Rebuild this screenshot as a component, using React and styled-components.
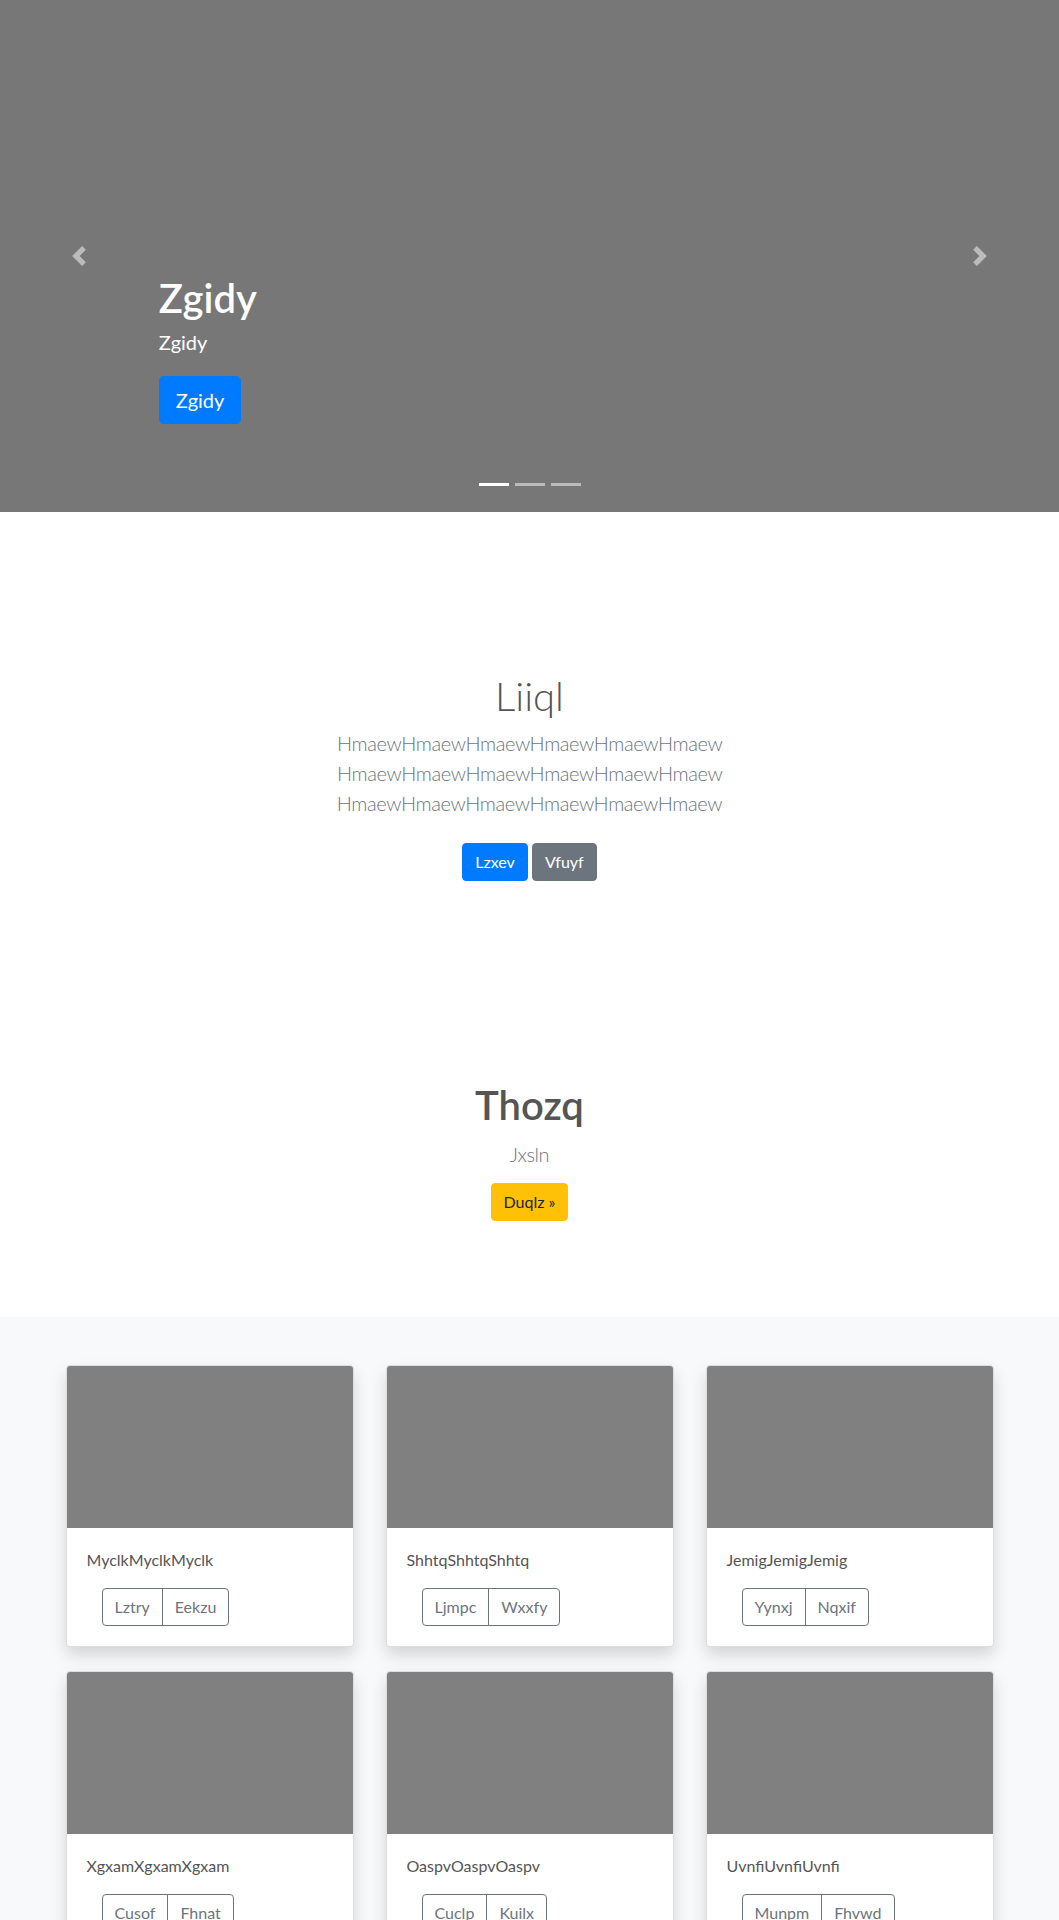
import React from 'react';
import styled, { createGlobalStyle } from 'styled-components';

const GlobalStyle = createGlobalStyle`
  *, *::before, *::after {
    box-sizing: border-box;
  }
  body {
    margin: 0;
    font-family: Lato, "Open Sans", "Noto Sans", sans-serif;
    font-size: 16px;
    line-height: 1.5;
    color: #555;
    background: #fff;
  }
`;

const Carousel = styled.div`
  position: relative;
  height: 512px;
  margin-bottom: 64px;
  background: #777;
  overflow: hidden;
`;

const Control = styled.button`
  position: absolute;
  top: 0;
  bottom: 0;
  ${(p) => (p.$side === 'left' ? 'left: 0;' : 'right: 0;')}
  width: 15%;
  display: flex;
  align-items: center;
  justify-content: center;
  padding: 0;
  border: none;
  background: none;
  opacity: 0.5;
  cursor: pointer;
`;

const Caption = styled.div`
  position: absolute;
  left: 15%;
  right: 15%;
  bottom: 52px;
  padding: 20px 0;
  color: #fff;
  text-align: left;
`;

const CaptionTitle = styled.h1`
  margin: 0 0 5px;
  font-size: 40px;
  font-weight: 600;
  line-height: 1.2;
`;

const CaptionText = styled.p`
  margin: 0 0 19px;
  font-size: 20px;
  line-height: 1.5;
`;

const Indicators = styled.ol`
  position: absolute;
  left: 15%;
  right: 15%;
  bottom: 0;
  display: flex;
  justify-content: center;
  margin: 0 0 16px;
  padding: 0;
  list-style: none;
`;

const Indicator = styled.li`
  box-sizing: content-box;
  width: 30px;
  height: 3px;
  margin: 0 3px;
  border-top: 10px solid transparent;
  border-bottom: 10px solid transparent;
  background: #fff;
  background-clip: padding-box;
  opacity: ${(p) => (p.$active ? 1 : 0.5)};
`;

const Btn = styled.a`
  display: inline-block;
  padding: ${(p) => (p.$lg ? '8px 16px' : '6px 12px')};
  font-size: ${(p) => (p.$lg ? '20px' : '16px')};
  line-height: 1.5;
  border: 1px solid ${(p) => p.$bg};
  border-radius: ${(p) => (p.$lg ? '4.8px' : '4px')};
  background: ${(p) => p.$bg};
  color: ${(p) => p.$fg || '#fff'};
  text-decoration: none;
  cursor: pointer;
`;

const CaptionActions = styled.p`
  margin: 0 0 16px;
`;

const Jumbotron = styled.section`
  padding: ${(p) => p.$pad || '96px 16px'};
  text-align: center;
`;

const Narrow = styled.div`
  max-width: 450px;
  margin: 0 auto;
`;

const Heading = styled.h1`
  margin: 0 0 ${(p) => (p.$light ? '8px' : '10px')};
  font-size: 40px;
  font-weight: ${(p) => (p.$light ? 300 : 600)};
  line-height: 1.2;
  color: #555;
`;

const Lead = styled.p`
  margin: 0 0 ${(p) => p.$mb || '16px'};
  font-size: 20px;
  font-weight: 300;
  line-height: 1.5;
  letter-spacing: -0.02em;
  color: #6c757d;
`;

const Actions = styled.div`
  display: flex;
  justify-content: center;
  gap: 4px;
  margin: 8px 0;
`;

const Album = styled.section`
  padding: 48px 0;
  background: #f8f9fa;
`;

const CardGrid = styled.div`
  width: 928px;
  margin: 0 auto;
  display: grid;
  grid-template-columns: repeat(3, 1fr);
  column-gap: 32px;
  row-gap: 24px;
`;

const Card = styled.div`
  display: flex;
  flex-direction: column;
  background: #fff;
  border: 1px solid rgba(0, 0, 0, 0.125);
  border-radius: 4px;
  box-shadow: 0 8px 16px rgba(0, 0, 0, 0.15);
  overflow: hidden;
`;

const Thumb = styled.div`
  height: 162px;
  background: #808080;
`;

const CardBody = styled.div`
  padding: 20px;
`;

const CardText = styled.p`
  margin: 0 0 16px;
  color: #555;
`;

const Group = styled.div`
  display: inline-flex;
  margin-left: 15px;
`;

const GroupBtn = styled.button`
  padding: 6px 12px;
  font-family: inherit;
  font-size: 16px;
  line-height: 1.5;
  color: #6c757d;
  background: transparent;
  border: 1px solid #6c757d;
  border-radius: 0;
  cursor: pointer;
  &:first-child {
    border-radius: 4px 0 0 4px;
  }
  &:last-child {
    margin-left: -1px;
    border-radius: 0 4px 4px 0;
  }
`;

const Chevron = ({ dir }) => (
  <svg width="20" height="20" viewBox="0 0 8 8" fill="#fff">
    {dir === 'left' ? (
      <path d="M5.25 0l-4 4 4 4 1.5-1.5L4.25 4l2.5-2.5L5.25 0z" />
    ) : (
      <path d="M2.75 0l-1.5 1.5L3.75 4l-2.5 2.5L2.75 8l4-4-4-4z" />
    )}
  </svg>
);

const cards = [
  { text: 'MyclkMyclkMyclk', a: 'Lztry', b: 'Eekzu' },
  { text: 'ShhtqShhtqShhtq', a: 'Ljmpc', b: 'Wxxfy' },
  { text: 'JemigJemigJemig', a: 'Yynxj', b: 'Nqxif' },
  { text: 'XgxamXgxamXgxam', a: 'Cusof', b: 'Fhnat' },
  { text: 'OaspvOaspvOaspv', a: 'Cuclp', b: 'Kuilx' },
  { text: 'UvnfiUvnfiUvnfi', a: 'Munpm', b: 'Fhvwd' },
];

const lead = 'HmaewHmaewHmaewHmaewHmaewHmaew';

export default function App() {
  return (
    <>
      <GlobalStyle />
      <Carousel>
        <Indicators>
          <Indicator $active />
          <Indicator />
          <Indicator />
        </Indicators>
        <Caption>
          <CaptionTitle>Zgidy</CaptionTitle>
          <CaptionText>Zgidy</CaptionText>
          <CaptionActions>
            <Btn $lg $bg="#007bff">Zgidy</Btn>
          </CaptionActions>
        </Caption>
        <Control $side="left" aria-label="Previous">
          <Chevron dir="left" />
        </Control>
        <Control $side="right" aria-label="Next">
          <Chevron dir="right" />
        </Control>
      </Carousel>

      <Jumbotron $pad="96px 16px 96px">
        <Narrow>
          <Heading $light>Liiql</Heading>
          <Lead $mb="25px">
            {lead} {lead} {lead}
          </Lead>
          <Actions>
            <Btn $bg="#007bff">Lzxev</Btn>
            <Btn $bg="#6c757d">Vfuyf</Btn>
          </Actions>
        </Narrow>
      </Jumbotron>

      <Jumbotron $pad="96px 16px 88px">
        <Heading>Thozq</Heading>
        <Lead $mb="14px">Jxsln</Lead>
        <Actions>
          <Btn $bg="#ffc107" $fg="#212529">Duqlz »</Btn>
        </Actions>
      </Jumbotron>

      <Album>
        <CardGrid>
          {cards.map((c) => (
            <Card key={c.text}>
              <Thumb />
              <CardBody>
                <CardText>{c.text}</CardText>
                <Group>
                  <GroupBtn>{c.a}</GroupBtn>
                  <GroupBtn>{c.b}</GroupBtn>
                </Group>
              </CardBody>
            </Card>
          ))}
        </CardGrid>
      </Album>
    </>
  );
}
